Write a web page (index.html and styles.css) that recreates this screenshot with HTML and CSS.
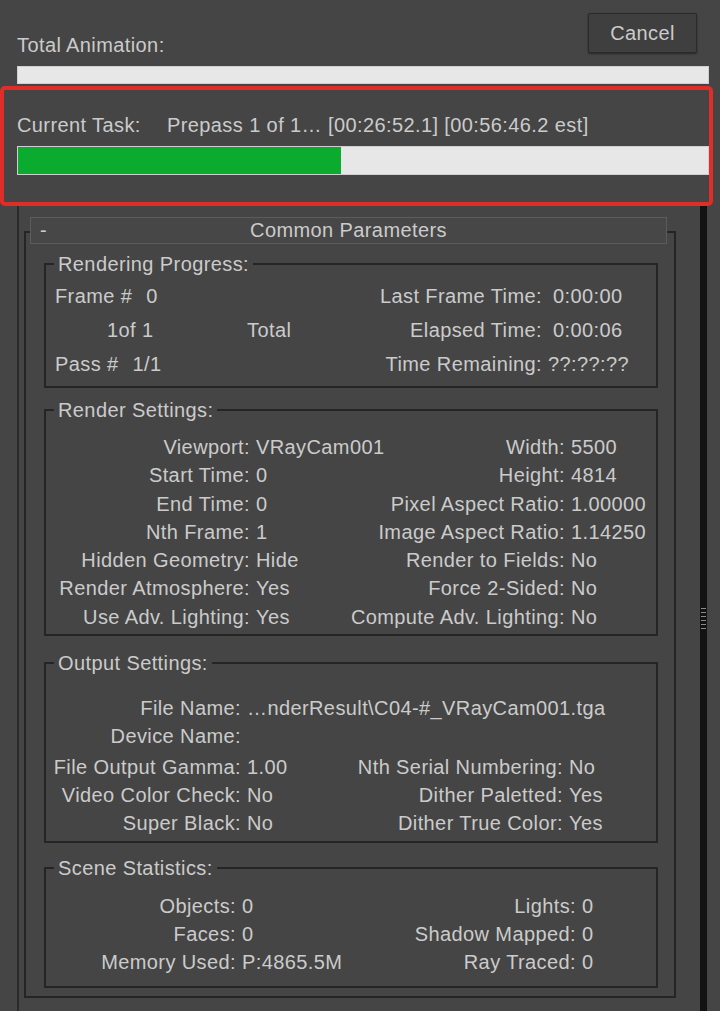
FILE: index.html
```html
<!DOCTYPE html>
<html lang="en">
<head>
  <meta charset="UTF-8">
  <title>Rendering</title>
  <meta name="viewport" content="width=device-width,initial-scale=1">
  <link rel="stylesheet" href="styles.css">
</head>
<body>

<!-- Total animation progress -->
<div class="anim-head">
  <span class="anim-label">Total Animation:</span>
  <button class="cancel">Cancel</button>
</div>
<div class="bar bar-total"></div>

<!-- Current task (highlighted) -->
<div class="task-box">
  <div class="task-line">
    <span class="task-label">Current Task:</span>
    <span>Prepass 1 of 1… [00:26:52.1] [00:56:46.2 est]</span>
  </div>
  <div class="bar bar-task"><div class="bar-fill" style="width:46.8%"></div></div>
</div>

<!-- Parameters panel -->
<div class="panel">
  <div class="panel-body">
    <div class="rollout">
      <div class="rollout-head">
        <span class="minus">-</span>
        <span>Common Parameters</span>
        <span></span>
      </div>

      <div class="group group-progress">
        <div class="group-title">Rendering Progress:</div>
        <div class="kv kv-progress">
          <span class="pl">Frame #<span class="gap">0</span></span>
          <span class="k">Last Frame Time:</span><span class="v v-far">0:00:00</span>
          <span class="pl pl-mid"><span class="of">1of 1</span>Total</span>
          <span class="k">Elapsed Time:</span><span class="v v-far">0:00:06</span>
          <span class="pl">Pass #<span class="gap">1/1</span></span>
          <span class="k">Time Remaining:</span><span class="v">??:??:??</span>
        </div>
      </div>

      <div class="group group-render">
        <div class="group-title">Render Settings:</div>
        <div class="kv kv-render">
          <span class="k">Viewport:</span><span class="v">VRayCam001</span>
          <span class="k">Width:</span><span class="v">5500</span>
          <span class="k">Start Time:</span><span class="v">0</span>
          <span class="k">Height:</span><span class="v">4814</span>
          <span class="k">End Time:</span><span class="v">0</span>
          <span class="k">Pixel Aspect Ratio:</span><span class="v">1.00000</span>
          <span class="k">Nth Frame:</span><span class="v">1</span>
          <span class="k">Image Aspect Ratio:</span><span class="v">1.14250</span>
          <span class="k">Hidden Geometry:</span><span class="v">Hide</span>
          <span class="k">Render to Fields:</span><span class="v">No</span>
          <span class="k">Render Atmosphere:</span><span class="v">Yes</span>
          <span class="k">Force 2-Sided:</span><span class="v">No</span>
          <span class="k">Use Adv. Lighting:</span><span class="v">Yes</span>
          <span class="k">Compute Adv. Lighting:</span><span class="v">No</span>
        </div>
      </div>

      <div class="group group-output">
        <div class="group-title">Output Settings:</div>
        <div class="kv kv-output">
          <span class="k">File Name:</span><span class="v v-wide">…nderResult\C04-#_VRayCam001.tga</span>
          <span class="k">Device Name:</span><span class="v v-wide"></span>
          <span class="k">File Output Gamma:</span><span class="v">1.00</span>
          <span class="k">Nth Serial Numbering:</span><span class="v">No</span>
          <span class="k">Video Color Check:</span><span class="v">No</span>
          <span class="k">Dither Paletted:</span><span class="v">Yes</span>
          <span class="k">Super Black:</span><span class="v">No</span>
          <span class="k">Dither True Color:</span><span class="v">Yes</span>
        </div>
      </div>

      <div class="group group-scene">
        <div class="group-title">Scene Statistics:</div>
        <div class="kv kv-scene">
          <span class="k">Objects:</span><span class="v">0</span>
          <span class="k">Lights:</span><span class="v">0</span>
          <span class="k">Faces:</span><span class="v">0</span>
          <span class="k">Shadow Mapped:</span><span class="v">0</span>
          <span class="k">Memory Used:</span><span class="v">P:4865.5M</span>
          <span class="k">Ray Traced:</span><span class="v">0</span>
        </div>
      </div>
    </div>
  </div>
  <div class="scrollbar"><div class="grip"></div></div>
</div>

</body>
</html>
```

FILE: styles.css
```css
/* Dialog colours */
:root {
  --bg: #454545;
  --text: #cbcbcb;
  --line-dark: #252525;
  --bar-bg: #e7e7e7;
  --bar-fill: #0aab2e;
  --highlight: #e02d27;
}
html, body {
  margin: 0;
  padding: 0;
  background: var(--bg);
  color: var(--text);
  font-family: "Liberation Sans", Arial, sans-serif;
  font-size: 20px;
  letter-spacing: 0.4px;
}
body {
  width: 720px;
  height: 1011px;
  overflow: hidden;
}

/* Top: total animation */
.anim-head {
  display: flex;
  justify-content: space-between;
  align-items: flex-start;
  padding: 13px 23px 0 17px;
}
.anim-label {
  margin-top: 20px;
  line-height: 24px;
}
.cancel {
  width: 109px;
  height: 40px;
  padding: 0;
  background: #3f3f3f;
  border: 1px solid #2a2a2a;
  border-radius: 2px;
  box-shadow: 0 1px 2px rgba(0,0,0,0.45);
  color: var(--text);
  font: inherit;
  letter-spacing: inherit;
}

/* Progress bars */
.bar {
  box-sizing: border-box;
  background: var(--bar-bg);
  border: 1px solid #cfcfcf;
}
.bar-total {
  margin: 9px 11px 0 17px;
  height: 18px;
}
.bar-task {
  margin-top: 9px;
  width: 692px;
  height: 29px;
}
.bar-fill {
  height: 100%;
  background: var(--bar-fill);
}

/* Highlighted current task */
.task-box {
  box-sizing: border-box;
  width: 713px;
  height: 120px;
  margin-top: 2px;
  border: 4px solid var(--highlight);
  border-radius: 5px;
  padding: 23px 0 0 13px;
}
.task-line {
  display: flex;
  line-height: 24px;
}
.task-label { width: 150px; }

/* Panel with scrollbar */
.panel {
  display: flex;
  box-sizing: border-box;
  width: 690px;
  height: 805px;
  margin-left: 17px;
  border-left: 2px solid #2b2b2b;
}
.panel-body { flex: 1; }
.scrollbar {
  width: 7px;
  background: #121212;
}
.grip {
  margin: 402px 1px 0;
  height: 22px;
  background: repeating-linear-gradient(to bottom, #8a8a8a 0 1px, transparent 1px 4px);
}

/* Rollout */
.rollout {
  box-sizing: border-box;
  width: 652px;
  margin: 25px 0 0 5px;
  border: 2px solid var(--line-dark);
  padding-bottom: 8px;
}
.rollout-head {
  display: grid;
  grid-template-columns: 1fr auto 1fr;
  align-items: center;
  box-sizing: border-box;
  height: 27px;
  margin: -16px 7px 0 4px;
  border: 1px solid #5c5c5c;
  background: #474747;
  line-height: 25px;
}
.minus { padding-left: 9px; }

/* Group boxes */
.group {
  margin: 0 16px 0 18px;
  border: 2px solid var(--line-dark);
}
.group-title {
  width: fit-content;
  margin: -12px 0 0 8px;
  padding: 0 4px;
  background: var(--bg);
  line-height: 22px;
}
.kv {
  display: grid;
  white-space: nowrap;
}
.k { text-align: right; }
.v { padding-left: 6px; }

.group-progress { margin-top: 19px; padding-bottom: 5px; }
.kv-progress {
  margin-top: 4px;
  grid-template-columns: 254px 242px 1fr;
  grid-auto-rows: 34px;
  line-height: 34px;
}
.v-far { padding-left: 11px; }
.pl { padding-left: 9px; }
.pl-mid { padding-left: 61px; }
.gap { margin-left: 14px; }
.of { display: inline-block; width: 140px; }

.group-render { margin-top: 21px; padding-bottom: 3px; }
.kv-render {
  margin-top: 12px;
  grid-template-columns: 204px 90px 225px 1fr;
  grid-auto-rows: 28.3px;
  line-height: 28.3px;
}

.group-output { margin-top: 26px; padding-bottom: 4px; }
.kv-output {
  margin-top: 20px;
  grid-template-columns: 195px 99px 223px 1fr;
  grid-template-rows: 28px 28px 31px 28px 28px;
  line-height: 28px;
  align-items: end;
}
.v-wide { grid-column: 2 / -1; }

.group-scene { margin-top: 24px; padding-bottom: 10px; }
.kv-scene {
  margin-top: 13px;
  grid-template-columns: 190px 104px 236px 1fr;
  grid-auto-rows: 28px;
  line-height: 28px;
}
```
